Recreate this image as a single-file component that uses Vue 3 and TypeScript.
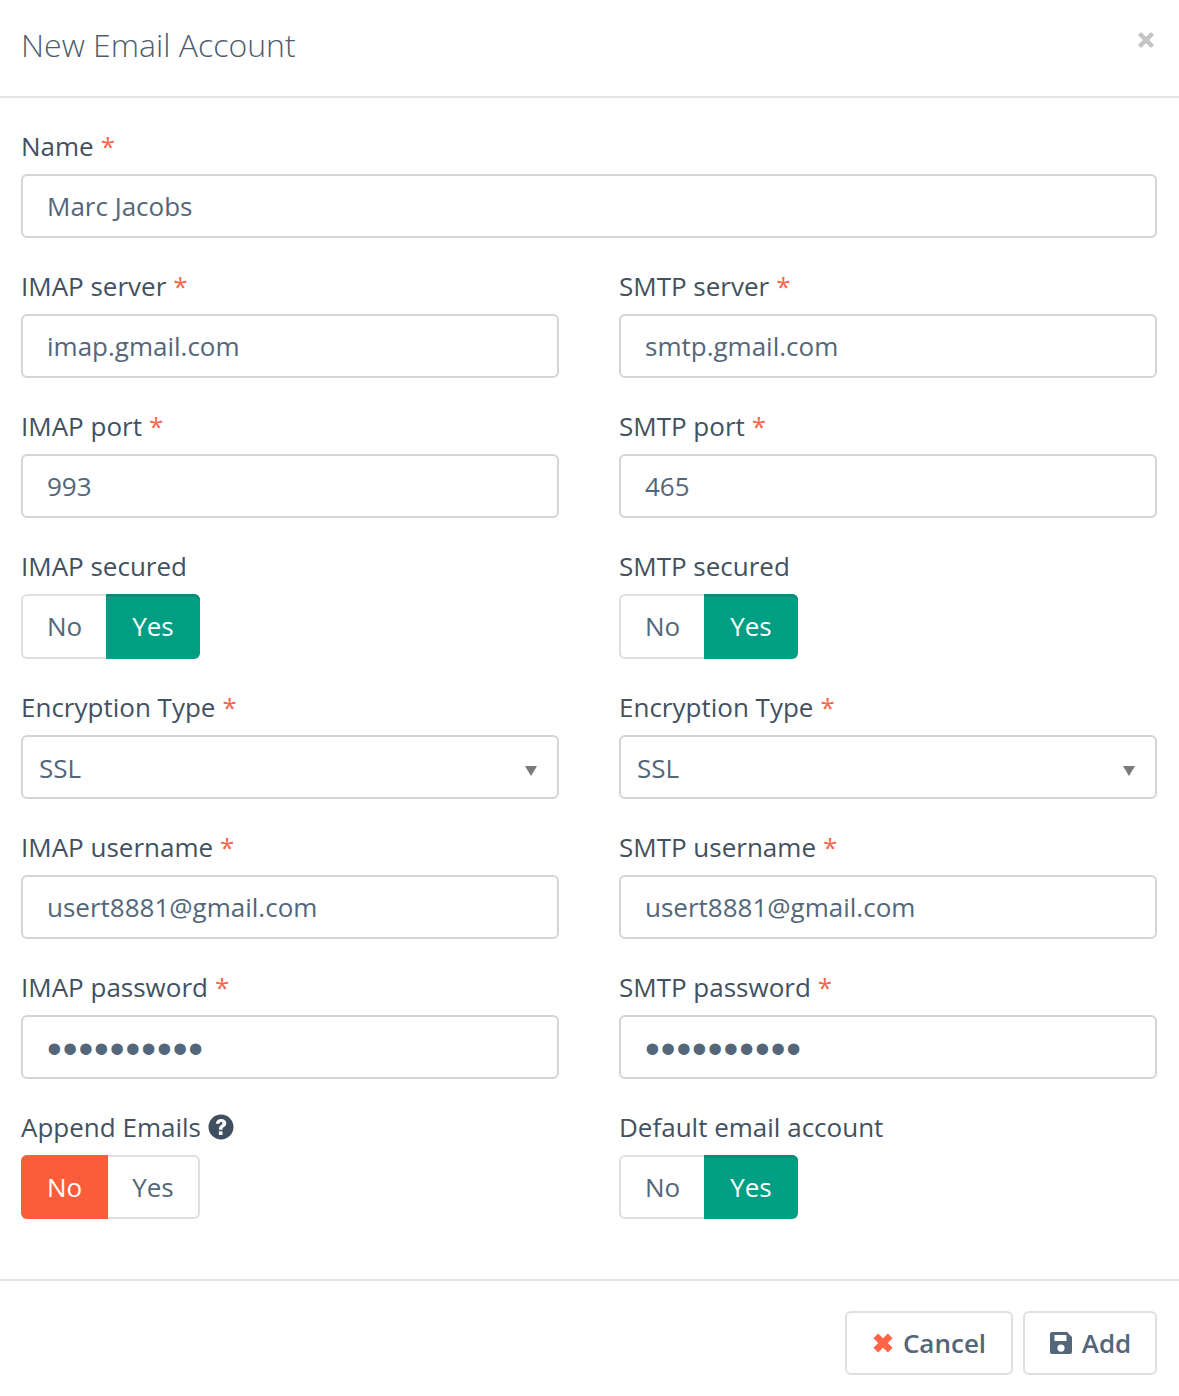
<script setup lang="ts">
interface Field {
  label: string
  kind: 'text' | 'password' | 'toggle' | 'select'
  value?: string
  required?: boolean
  help?: boolean
  on?: 'No' | 'Yes'
}

const rows: Field[][] = [
  [
    { label: 'IMAP server', kind: 'text', value: 'imap.gmail.com', required: true },
    { label: 'SMTP server', kind: 'text', value: 'smtp.gmail.com', required: true },
  ],
  [
    { label: 'IMAP port', kind: 'text', value: '993', required: true },
    { label: 'SMTP port', kind: 'text', value: '465', required: true },
  ],
  [
    { label: 'IMAP secured', kind: 'toggle', on: 'Yes' },
    { label: 'SMTP secured', kind: 'toggle', on: 'Yes' },
  ],
  [
    { label: 'Encryption Type', kind: 'select', value: 'SSL', required: true },
    { label: 'Encryption Type', kind: 'select', value: 'SSL', required: true },
  ],
  [
    { label: 'IMAP username', kind: 'text', value: 'usert8881@gmail.com', required: true },
    { label: 'SMTP username', kind: 'text', value: 'usert8881@gmail.com', required: true },
  ],
  [
    { label: 'IMAP password', kind: 'password', value: 'abcdefghij', required: true },
    { label: 'SMTP password', kind: 'password', value: 'abcdefghij', required: true },
  ],
  [
    { label: 'Append Emails', kind: 'toggle', on: 'No', help: true },
    { label: 'Default email account', kind: 'toggle', on: 'Yes' },
  ],
]
</script>

<template>
  <div class="modal">
    <header class="head">
      <h1 class="title">New Email Account</h1>
      <button class="close" type="button" aria-label="Close">
        <svg width="18" height="18" viewBox="0 0 18 18"><path d="M2.500 2.500l13 13M15.500 2.500l-13 13" stroke="#c4c4c4" stroke-width="4.400" fill="none"/></svg>
      </button>
    </header>

    <form class="body" @submit.prevent>
      <div class="field">
        <label class="label">Name <span class="req">*</span></label>
        <input class="control" type="text" value="Marc Jacobs" />
      </div>

      <div v-for="(row, r) in rows" :key="r" class="row">
        <div v-for="f in row" :key="f.label + r" class="field">
          <label class="label">
            {{ f.label }}
            <span v-if="f.required" class="req">*</span>
            <svg v-if="f.help" class="help" width="26" height="26" viewBox="0 0 26 26">
              <circle cx="13" cy="13" r="12.500" fill="#3f4f5f"/>
              <path d="M7.800 9.800c.3-3 2.400-4.900 5.400-4.900 3 0 5.100 1.800 5.100 4.300 0 2-1.100 3-2.400 3.900-1.100.7-1.400 1.200-1.400 2.200v.5h-3.600v-.9c0-1.800.8-2.800 2-3.700.9-.7 1.600-1.100 1.600-1.900 0-.8-.6-1.300-1.500-1.300-1 0-1.500.7-1.600 1.800z" fill="#fff"/>
              <rect x="10.900" y="17.300" width="3.600" height="3.600" fill="#fff"/>
            </svg>
          </label>

          <input v-if="f.kind === 'text'" class="control" type="text" :value="f.value" />
          <input v-else-if="f.kind === 'password'" class="control pass" type="password" :value="f.value" />

          <div v-else-if="f.kind === 'select'" class="select-wrap">
            <select class="control select"><option>{{ f.value }}</option></select>
            <span class="caret"></span>
          </div>

          <div v-else class="toggle" :class="{ short: f.help || f.label.startsWith('Default') }">
            <span class="opt opt-no" :class="{ danger: f.on === 'No' }">No</span>
            <span class="opt opt-yes" :class="{ success: f.on === 'Yes' }">Yes</span>
          </div>
        </div>
      </div>
    </form>

    <footer class="foot">
      <button class="btn btn-cancel" type="button">
        <svg width="22" height="22" viewBox="0 0 22 22"><path d="M3.800 3.800l14.400 14.400M18.200 3.800L3.800 18.200" stroke="#fc6647" stroke-width="6.600" fill="none"/></svg>
        Cancel
      </button>
      <button class="btn btn-add" type="button">
        <svg width="24" height="24" viewBox="0 0 24 24"><path fill-rule="evenodd" d="M3 1h15l5 5v15a2 2 0 0 1-2 2H3a2 2 0 0 1-2-2V3a2 2 0 0 1 2-2zm2.500 3v6h12V4.500L17 4zM12 13.500a3.600 3.600 0 1 0 0 7.200 3.600 3.600 0 0 0 0-7.200z" fill="#54667a"/></svg>
        Add
      </button>
    </footer>
  </div>
</template>

<style>
html, body { margin: 0; background: #fff; }
</style>

<style scoped>
.modal {
  width: 1179px;
  height: 1396px;
  box-sizing: border-box;
  font-family: "Open Sans", sans-serif;
  color: #54667a;
  background: #fff;
  display: flex;
  flex-direction: column;
}
.head {
  height: 98px;
  box-sizing: border-box;
  border-bottom: 2px solid #e5e5e5;
  padding: 0 22px 0 21px;
  display: flex;
  justify-content: space-between;
}
.title {
  margin: 0;
  padding-top: 23px;
  font-size: 32px;
  line-height: 43px;
  font-weight: 300;
  color: #4e5d6c;
}
.close {
  border: 0;
  background: none;
  padding: 0;
  height: 18px;
  margin-top: 31px;
  margin-right: 2px;
  line-height: 0;
}
.body {
  flex: 1;
  padding: 28px 22px 0 21px;
  display: flex;
  flex-direction: column;
}
.row {
  display: grid;
  grid-template-columns: 538px 538px;
  column-gap: 60px;
}
.field { margin-bottom: 28px; }
.label {
  display: flex;
  align-items: center;
  gap: 7px;
  height: 40px;
  margin-bottom: 8px;
  font-size: 26px;
  color: #43515f;
  white-space: nowrap;
}
.req { color: #f4674a; }
.control {
  display: block;
  width: 100%;
  height: 64px;
  box-sizing: border-box;
  border: 2px solid #d4d4d4;
  border-radius: 6px;
  padding: 0 24px;
  background: #fff;
  font-family: "Open Sans", sans-serif;
  font-size: 26px;
  color: #54667a;
  outline: none;
}
.pass {
  font-family: "Liberation Sans", sans-serif;
  font-size: 42px;
  letter-spacing: 1px;
  padding-top: 3px;
}
.select-wrap { position: relative; }
.select {
  appearance: none;
  -webkit-appearance: none;
  padding: 2px 16px 0;
}
.caret {
  position: absolute;
  right: 22px;
  top: 31px;
  width: 0;
  height: 0;
  border-left: 6px solid transparent;
  border-right: 6px solid transparent;
  border-top: 10px solid #7a7a7a;
}
.toggle {
  display: flex;
  width: 179px;
  height: 65px;
}
.toggle.short { height: 64px; }
.opt {
  box-sizing: border-box;
  display: flex;
  align-items: center;
  justify-content: center;
  font-size: 26px;
  padding-bottom: 1px;
  border: 2px solid #e0e0e0;
}
.opt-no {
  width: 85px;
  border-right: 0;
  border-radius: 6px 0 0 6px;
}
.opt-yes {
  width: 94px;
  border-left: 0;
  border-radius: 0 6px 6px 0;
}
.success {
  background: #009e82;
  border: 0;
  box-shadow: inset 0 3px 0 #008f76;
  color: #fff;
}
.danger {
  width: 87px;
  background: #fd5c3a;
  border: 0;
  color: #fff;
}
.danger + .opt-yes { width: 92px; }
.foot {
  height: 117px;
  box-sizing: border-box;
  border-top: 2px solid #e5e5e5;
  padding: 30px 22px 0 0;
  display: flex;
  justify-content: flex-end;
  align-items: flex-start;
  gap: 10px;
}
.btn {
  height: 64px;
  box-sizing: border-box;
  display: flex;
  align-items: center;
  justify-content: center;
  gap: 9px;
  border: 2px solid #e0e0e0;
  border-radius: 6px;
  background: #fff;
  padding: 0;
  font-family: "Open Sans", sans-serif;
  font-size: 26px;
  font-weight: 600;
  color: #54667a;
}
.btn-cancel { width: 168px; }
.btn-add { width: 134px; }
</style>
